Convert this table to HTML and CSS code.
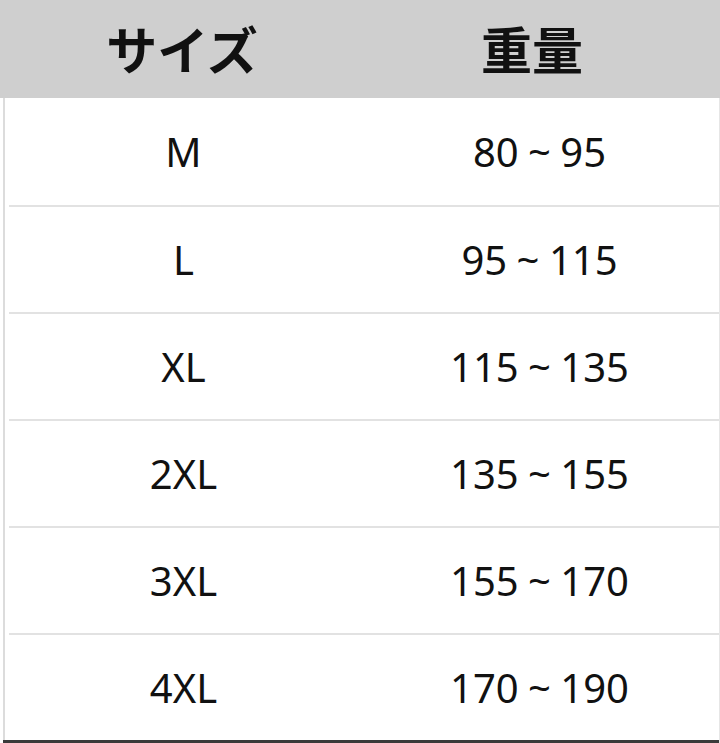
FILE: index.html
```html
<!DOCTYPE html>
<html lang="ja">
<head>
<meta charset="utf-8">
<link rel="stylesheet" href="styles.css">
</head>
<body>
<div class="chart">
  <div class="head">
    <div class="hcell">サイズ</div>
    <div class="hcell">重量</div>
  </div>
  <div class="rows">
    <div class="row"><div class="cell">M</div><div class="cell">80 ~ 95</div></div>
    <div class="row"><div class="cell">L</div><div class="cell">95 ~ 115</div></div>
    <div class="row"><div class="cell">XL</div><div class="cell">115 ~ 135</div></div>
    <div class="row"><div class="cell">2XL</div><div class="cell">135 ~ 155</div></div>
    <div class="row"><div class="cell">3XL</div><div class="cell">155 ~ 170</div></div>
    <div class="row last"><div class="cell">4XL</div><div class="cell">170 ~ 190</div></div>
  </div>
</div>
</body>
</html>
```
FILE: styles.css
```css
html, body {
  margin: 0;
  padding: 0;
  background: #ffffff;
}
body {
  width: 720px;
  height: 743px;
  overflow: hidden;
  font-family: "Noto Sans", "Noto Sans CJK JP", sans-serif;
  color: #111;
}
* {
  box-sizing: border-box;
}
.chart {
  display: flex;
  flex-direction: column;
}
.head {
  height: 98px;
  background: #cfcfcf;
  display: grid;
  grid-template-columns: 362px 1fr;
  align-items: center;
}
.hcell {
  font-family: "Noto Sans CJK JP", sans-serif;
  font-weight: 700;
  font-size: 51px;
  text-align: center;
  line-height: 1;
  padding-bottom: 2px;
}
.hcell:first-child {
  padding-left: 2px;
}
.hcell + .hcell {
  padding-right: 18px;
}
.rows {
  margin-left: 3px;
  border-left: 2px solid #dcdcdc;
  border-right: 1px solid #e6e6e6;
  display: flex;
  flex-direction: column;
}
.row {
  height: 107px;
  display: grid;
  grid-template-columns: 357px 1fr;
  align-items: center;
  border-bottom: 2px solid #e2e2e2;
  margin-left: 4px;
}
.row:first-child {
  height: 109px;
}
.row.last {
  height: 108px;
  border-bottom: 3px solid #3a3a3a;
  margin-left: -2px;
  padding-left: 6px;
}
.cell {
  font-size: 40px;
  text-align: center;
  line-height: 1;
  padding-top: 1px;
  word-spacing: -1px;
}
.row .cell:first-child {
  padding-right: 8px;
}
.row .cell + .cell {
  padding-right: 6px;
}
```
